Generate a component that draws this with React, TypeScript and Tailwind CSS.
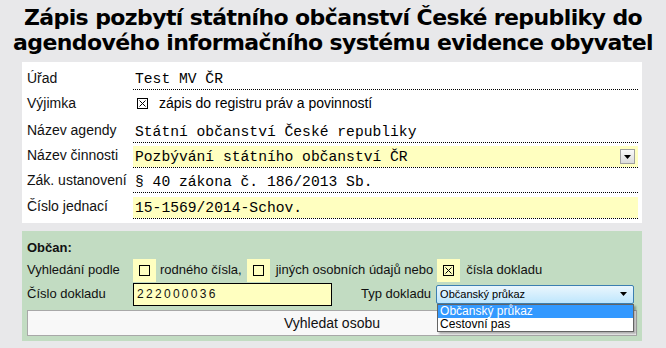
import React from 'react'

const sans = "font-['Liberation_Sans',Tahoma,sans-serif]"
const mono = "font-['Liberation_Mono','Courier_New',monospace]"

function CheckBox({ checked }: { checked?: boolean }) {
  return (
    <svg width="11" height="11" viewBox="0 0 11 11" className="shrink-0">
      <rect x="0.5" y="0.5" width="10" height="10" fill="none" stroke="#000" strokeWidth="1" />
      {checked && <path d="M2.5 2.5 L8.5 8.5 M8.5 2.5 L2.5 8.5" stroke="#000" strokeWidth="1" />}
    </svg>
  )
}

function YellowCheck({ checked }: { checked?: boolean }) {
  return (
    <span className="w-[23px] h-[23px] bg-[#ffffc0] flex items-center justify-center shrink-0">
      <CheckBox checked={checked} />
    </span>
  )
}

function Row({
  label,
  children,
  yellow,
  h,
}: {
  label: string
  children: React.ReactNode
  yellow?: boolean
  h: string
}) {
  return (
    <div className={`flex ${h}`}>
      <div className="w-[106px] flex items-center text-[14px] text-[#111]">{label}</div>
      <div className="flex-1 flex items-end border-b border-dotted border-black">
        <div className={`w-full h-[21px] flex items-center ${yellow ? 'bg-[#ffffc0]' : ''}`}>{children}</div>
      </div>
    </div>
  )
}

export default function App() {
  return (
    <div className={`w-[666px] h-[348px] bg-[#e8e8ea] overflow-hidden relative ${sans}`}>
      <h1 className="text-center font-bold text-[22px] leading-[25px] pt-[5px] text-black font-['DejaVu_Sans',Verdana,sans-serif] tracking-[-0.6px]">
        Zápis pozbytí státního občanství České republiky do
        <br />
        agendového informačního systému evidence obyvatel
      </h1>

      {/* Hlavička */}
      <div className="ml-[22px] w-[620px] mt-[7px] bg-white pl-[5px] pr-[4px] pt-[4px] pb-[4px]">
        <Row label="Úřad" h="h-[24px]">
          <span className={`${mono} text-[14.67px] pl-[2px]`}>Test MV ČR</span>
        </Row>
        <div className="flex h-[27px]">
          <div className="w-[106px] flex items-center text-[14px] text-[#111]">Výjimka</div>
          <div className="flex items-center gap-[11px] text-[14px] pl-[4px]">
            <CheckBox checked />
            <span>zápis do registru práv a povinností</span>
          </div>
        </div>
        <Row label="Název agendy" h="h-[26px]">
          <span className={`${mono} text-[14.67px] pl-[2px]`}>Státní občanství České republiky</span>
        </Row>
        <Row label="Název činnosti" h="h-[25px]" yellow>
          <span className={`${mono} text-[14.67px] pl-[2px] flex-1`}>Pozbývání státního občanství ČR</span>
          <span className="w-[15px] h-[15px] mr-[3px] bg-gradient-to-b from-[#fafafa] to-[#dcdcdc] border border-[#a0a0a0] flex items-center justify-center">
            <svg width="7" height="4" viewBox="0 0 7 4">
              <path d="M0 0 H7 L3.5 4 Z" fill="#000" />
            </svg>
          </span>
        </Row>
        <Row label="Zák. ustanovení" h="h-[25px]">
          <span className={`${mono} text-[14.67px] pl-[2px]`}>§ 40 zákona č. 186/2013 Sb.</span>
        </Row>
        <Row label="Číslo jednací" h="h-[26px]" yellow>
          <span className={`${mono} text-[14.67px] pl-[2px]`}>15-1569/2014-Schov.</span>
        </Row>
      </div>

      {/* Občan */}
      <div className="ml-[22px] w-[620px] mt-[8px] bg-[#c2dcc2] pl-[5px] pr-[5px] pt-[7px] pb-[5px] text-[13px] text-[#111]">
        <div className="font-bold h-[20px] leading-[20px]">Občan:</div>
        <div className="flex items-center h-[24px]">
          <span className="w-[106px]">Vyhledání podle</span>
          <YellowCheck />
          <span className="ml-[4px] mr-[5px]">rodného čísla,</span>
          <YellowCheck />
          <span className="ml-[6px] mr-[4px]">jiných osobních údajů nebo</span>
          <YellowCheck checked />
          <span className="ml-[6px]">čísla dokladu</span>
        </div>
        <div className="flex items-center h-[24px]">
          <span className="w-[106px]">Číslo dokladu</span>
          <div className="w-[199px] h-[23px] bg-[#ffffc0] border border-black flex items-center pl-[3px] tracking-[2.3px] text-[12px]">
            222000036
          </div>
          <span className="ml-[29px] mr-[5px]">Typ dokladu</span>
          <div className="relative">
            <div className="w-[198px] h-[19px] border border-[#3c7fb1] rounded-[2px] bg-gradient-to-b from-[#eaf6fd] to-[#bee6fd] flex items-center pl-[3px] text-[11px] text-black">
              <span className="flex-1">Občanský průkaz</span>
              <svg width="7" height="4" viewBox="0 0 7 4" className="mr-[6px]">
                <path d="M0 0 H7 L3.5 4 Z" fill="#000" />
              </svg>
            </div>
            <div className="absolute left-[1px] top-[19px] w-[197px] bg-white border border-[#646464] shadow-[2px_2px_2px_rgba(0,0,0,0.3)] text-[12px] z-10">
              <div className="h-[13px] leading-[13px] bg-[#3399ff] text-white pl-[2px]">Občanský průkaz</div>
              <div className="h-[13px] leading-[13px] text-black pl-[2px]">Cestovní pas</div>
            </div>
          </div>
        </div>
        <button className="mt-[4px] w-full h-[26px] bg-[#f8f8f8] border border-[#a8a8a8] text-[14px] text-[#111] flex items-center justify-center">
          Vyhledat osobu
        </button>
      </div>
    </div>
  )
}
